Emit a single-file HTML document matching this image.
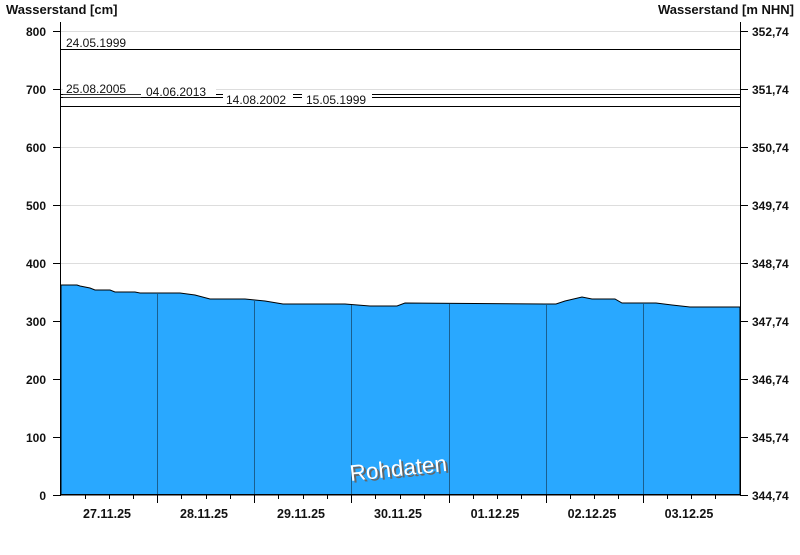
<!DOCTYPE html>
<html><head><meta charset="utf-8"><style>
body{margin:0;background:#fff;width:800px;height:550px;overflow:hidden}
svg text{font-family:"Liberation Sans",Arial,sans-serif}
</style></head><body>
<svg width="800" height="550" xmlns="http://www.w3.org/2000/svg">
<text x="6" y="14" font-size="13" font-weight="bold" fill="#111">Wasserstand [cm]</text>
<text x="794" y="14" font-size="13" font-weight="bold" fill="#111" text-anchor="end">Wasserstand [m NHN]</text>
<g stroke="#ddd" stroke-width="1">
<line x1="61" x2="740" y1="31.5" y2="31.5"/><line x1="61" x2="740" y1="89.5" y2="89.5"/>
<line x1="61" x2="740" y1="147.5" y2="147.5"/><line x1="61" x2="740" y1="205.5" y2="205.5"/>
<line x1="61" x2="740" y1="263.5" y2="263.5"/>
</g>
<path fill="#29a8ff" stroke="#000" stroke-width="1" d="M61,495 L61,285 L77,285 L80,286 L90,288 L95,290 L110,290 L115,292 L135,292 L140,293 L180,293 L195,295 L210,299 L245,299 L255,300 L265,301 L283,304 L345,304 L370,306 L397,306 L405,303 L545,304 L556,304 L565,301 L582,297 L592,299 L615,299 L622,303 L656,303 L672,305 L690,307 L740,307 L740,495 Z"/>
<g stroke="#1a5f8f" stroke-width="1">
<line x1="157.5" x2="157.5" y1="294" y2="495"/><line x1="254.5" x2="254.5" y1="300" y2="495"/>
<line x1="351.5" x2="351.5" y1="305" y2="495"/><line x1="449.5" x2="449.5" y1="304" y2="495"/>
<line x1="546.5" x2="546.5" y1="305" y2="495"/><line x1="643.5" x2="643.5" y1="304" y2="495"/>
</g>
<g stroke="#000" stroke-width="1">
<line x1="61" x2="740" y1="49.5" y2="49.5"/>
<line x1="61" x2="740" y1="94.5" y2="94.5"/>
<line x1="61" x2="740" y1="97.5" y2="97.5"/>
<line x1="61" x2="740" y1="106.5" y2="106.5"/>
</g>
<g fill="#fff"><rect x="63" y="87" width="78" height="7"/><rect x="141" y="86" width="75" height="10"/><rect x="223" y="93" width="70" height="11"/><rect x="302" y="93" width="70" height="11"/>
<rect x="63" y="94.8" width="78" height="2.4"/></g>
<g font-size="12" fill="#111">
<text x="66" y="47">24.05.1999</text>
<text x="66" y="93">25.08.2005</text>
<text x="146" y="96">04.06.2013</text>
<text x="226" y="104">14.08.2002</text>
<text x="306" y="104">15.05.1999</text>
</g>
<g stroke="#000" stroke-width="1">
<line x1="60.5" x2="60.5" y1="22" y2="495"/><line x1="740.5" x2="740.5" y1="22" y2="495"/>
<line x1="60" x2="741" y1="494.5" y2="494.5"/>
</g>
<g stroke="#000" stroke-width="1">
<path d="M53,31.5h8M53,89.5h8M53,147.5h8M53,205.5h8M53,263.5h8M53,321.5h8M53,379.5h8M53,437.5h8M53,495.5h8"/>
<path d="M740,31.5h8M740,89.5h8M740,147.5h8M740,205.5h8M740,263.5h8M740,321.5h8M740,379.5h8M740,437.5h8M740,495.5h8"/>
<path d="M157.5,495v8M254.5,495v8M351.5,495v8M449.5,495v8M546.5,495v8M643.5,495v8"/>
<path d="M85.5,495v4M109.5,495v4M133.5,495v4M181.5,495v4M206.5,495v4M230.5,495v4M278.5,495v4M303.5,495v4M327.5,495v4M375.5,495v4M400.5,495v4M424.5,495v4M473.5,495v4M497.5,495v4M521.5,495v4M570.5,495v4M594.5,495v4M618.5,495v4M667.5,495v4M691.5,495v4M715.5,495v4"/>
</g>
<g font-size="12" font-weight="bold" fill="#111" text-anchor="end">
<text x="46" y="36">800</text><text x="46" y="94">700</text><text x="46" y="152">600</text>
<text x="46" y="210">500</text><text x="46" y="268">400</text><text x="46" y="326">300</text>
<text x="46" y="384">200</text><text x="46" y="442">100</text><text x="46" y="500">0</text>
</g>
<g font-size="12" font-weight="bold" fill="#111">
<text x="752" y="36">352,74</text><text x="752" y="94">351,74</text><text x="752" y="152">350,74</text>
<text x="752" y="210">349,74</text><text x="752" y="268">348,74</text><text x="752" y="326">347,74</text>
<text x="752" y="384">346,74</text><text x="752" y="442">345,74</text><text x="752" y="500">344,74</text>
</g>
<g font-size="12.5" font-weight="bold" fill="#111" text-anchor="middle">
<text x="107" y="518">27.11.25</text><text x="204" y="518">28.11.25</text><text x="301" y="518">29.11.25</text>
<text x="398" y="518">30.11.25</text><text x="495" y="518">01.12.25</text><text x="592" y="518">02.12.25</text>
<text x="689" y="518">03.12.25</text>
</g>
<g transform="rotate(-6 398 466)" font-size="22.5" text-anchor="middle">
<text x="400" y="478" fill="#666">Rohdaten</text>
<text x="398" y="476" fill="#fff">Rohdaten</text>
</g>
</svg>
</body></html>
